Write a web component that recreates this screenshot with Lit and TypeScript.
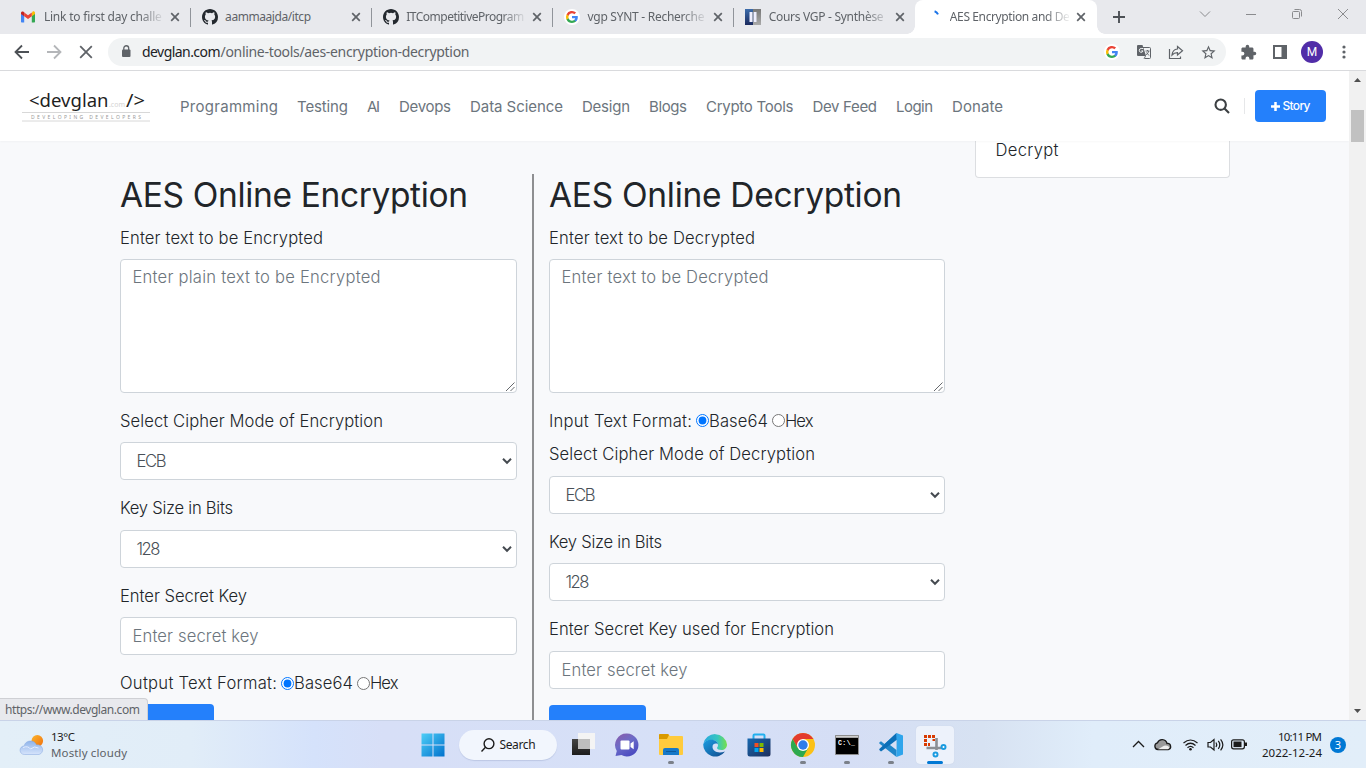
import { LitElement, html, css, svg } from "lit";
import { customElement, property, state } from "lit/decorators.js";
import { classMap } from "lit/directives/class-map.js";
import { styleMap } from "lit/directives/style-map.js";

/** A single line of text tracked out (or in) to fill a given width. */
@customElement("fit-text")
class FitText extends LitElement {
  static styles = css`
    :host { display: inline-block; white-space: pre; flex: none; }
    .box { display: block; }
    .run { display: inline-block; }
  `;
  @property() text = "";
  @property({ type: Number }) w = 0;
  @state() spacing = 0;

  firstUpdated() {
    const run = this.renderRoot.querySelector(".run") as HTMLElement;
    const natural = run.getBoundingClientRect().width;
    this.spacing = (this.w - natural) / Math.max(1, this.text.length - 1);
  }
  render() {
    return html`<span class="box" style=${styleMap({ width: `${this.w}px`, letterSpacing: `${this.spacing}px` })}><span class="run">${this.text}</span></span>`;
  }
}

const fit = (text: string, w: number) => html`<fit-text .text=${text} .w=${w}></fit-text>`;

const googleG = svg`
  <path fill="#4285F4" d="M22.56 12.25c0-.78-.07-1.53-.2-2.25H12v4.26h5.92a5.06 5.06 0 0 1-2.2 3.32v2.77h3.57c2.08-1.92 3.27-4.74 3.27-8.1z"/>
  <path fill="#34A853" d="M12 23c2.97 0 5.46-.98 7.28-2.66l-3.57-2.77c-.98.66-2.23 1.06-3.71 1.06-2.86 0-5.29-1.93-6.16-4.53H2.18v2.84A11 11 0 0 0 12 23z"/>
  <path fill="#FBBC05" d="M5.84 14.09a6.6 6.6 0 0 1 0-4.18V7.07H2.18a11 11 0 0 0 0 9.86l3.66-2.84z"/>
  <path fill="#EA4335" d="M12 5.38c1.62 0 3.06.56 4.21 1.64l3.15-3.15A11 11 0 0 0 2.18 7.07l3.66 2.84C6.71 7.31 9.14 5.38 12 5.38z"/>`;

const googleBadge = html`<svg width="16" height="16" viewBox="0 0 16 16"><circle cx="8" cy="8" r="8" fill="#fff"/><g transform="translate(1.4 1.4) scale(.55)">${googleG}</g></svg>`;

const icons = {
  gmail: html`<svg width="16" height="16" viewBox="0 0 16 16">
    <path fill="#4285f4" d="M1 4.2v8.2c0 .6.4 1 1 1h2.2V6.6z"/>
    <path fill="#34a853" d="M15 4.2v8.2c0 .6-.4 1-1 1h-2.2V6.6z"/>
    <path fill="#fbbc04" d="M11.8 3.9v3.4L15 5V3.9c0-1.300-1.500-2-2.500-1.200z"/>
    <path fill="#ea4335" d="M4.200 7.300V3.400L8 6.200l3.800-2.800v3.900L8 10.100z"/>
    <path fill="#c5221f" d="M1 3.900V5l3.200 2.300V3.400l-.7-.6C2.500 2 1 2.600 1 3.900z"/></svg>`,
  github: html`<svg width="16" height="16" viewBox="0 0 16 16"><path fill="#24292f" d="M8 0C3.580 0 0 3.580 0 8c0 3.540 2.290 6.530 5.470 7.590.4.070.550-.170.550-.380 0-.190-.010-.820-.010-1.490-2.010.370-2.530-.490-2.690-.940-.090-.230-.480-.940-.820-1.130-.280-.150-.680-.520-.010-.530.630-.010 1.080.580 1.230.820.720 1.210 1.870.870 2.330.660.070-.520.280-.870.510-1.070-1.780-.2-3.640-.890-3.640-3.950 0-.870.310-1.590.820-2.150-.080-.2-.360-1.020.080-2.120 0 0 .670-.210 2.200.820a7.600 7.600 0 0 1 4 0c1.530-1.040 2.200-.820 2.200-.820.440 1.100.160 1.920.080 2.120.510.560.820 1.270.820 2.150 0 3.070-1.870 3.750-3.650 3.950.290.250.540.730.540 1.480 0 1.070-.010 1.930-.010 2.200 0 .210.150.460.550.380A8.010 8.010 0 0 0 16 8c0-4.420-3.580-8-8-8z"/></svg>`,
  google: googleBadge,
  book: html`<svg width="16" height="16" viewBox="0 0 16 16"><defs><linearGradient id="b" x2="0" y2="1"><stop stop-color="#3c6cab"/><stop offset="1" stop-color="#1b2a5e"/></linearGradient><linearGradient id="c" x2="0" y2="1"><stop stop-color="#777"/><stop offset="1" stop-color="#aaa"/></linearGradient></defs><path fill="url(#b)" d="M0 0h8v3H5v10h3v3H0z"/><path fill="url(#c)" d="M8 0h8v16H8v-3h3V3H8z"/><path fill="#eef" d="M4.500 3h3v10h-3zM8.500 3h3v10h-3z"/><path fill="#53617f" d="M7.500 3h1v10h-1z"/></svg>`,
  spinner: html`<svg width="16" height="16" viewBox="0 0 16 16"><path d="M8.600 2.300q2.400.8 3.400 3.100" fill="none" stroke="#1a73e8" stroke-width="2"/></svg>`,
};

const tabs = [
  { icon: icons.gmail, text: "Link to first day challe", w: 118 },
  { icon: icons.github, text: "aammaajda/itcp", w: 86 },
  { icon: icons.github, text: "ITCompetitiveProgram", w: 118 },
  { icon: icons.google, text: "vgp SYNT - Recherche", w: 117 },
  { icon: icons.book, text: "Cours VGP - Synthèse", w: 115 },
  { icon: icons.spinner, text: "AES Encryption and De", w: 120 },
];

@customElement("browser-chrome")
class BrowserChrome extends LitElement {
  static styles = css`
    :host { display: block; font-family: "Noto Sans", "Open Sans", sans-serif; color: #5f6368; }
    svg { display: block; flex: none; }
    .strip { display: flex; height: 34px; background: #e8e9ed; padding-left: 9.4px; box-sizing: border-box; }
    .tab { display: flex; align-items: center; box-sizing: border-box; width: 181.200px; padding: 0 10px 0 11px; position: relative; font-size: 12px; }
    .label { display: flex; margin-left: 7.500px; width: 119px; overflow: hidden; line-height: 18px; }
    .fade { mask-image: linear-gradient(90deg, #000 80%, transparent 102%); }
    .close { margin-left: 7px; }
    .sep::after { content: ""; position: absolute; right: 0; top: 8px; width: 1px; height: 19px; background: #90949a; }
    .active { background: #fff; border-radius: 8px 8px 0 0; }
    .active::before, .active::after { content: ""; position: absolute; bottom: 0; width: 8px; height: 8px; }
    .active::before { left: -8px; background: radial-gradient(circle at 0 0, transparent 7.500px, #fff 8px); }
    .active::after { right: -8px; background: radial-gradient(circle at 100% 0, transparent 7.500px, #fff 8px); }
    .plus { align-self: center; margin-left: 15px; }
    .win { display: flex; margin-left: auto; height: 28px; }
    .win svg { width: 46px; height: 28px; }
    .bar { display: flex; align-items: center; height: 36px; background: #fff; padding: 0 6px; border-bottom: 1px solid #d9dadd; }
    .btn { width: 32px; height: 32px; display: grid; place-items: center; }
    .omni { display: flex; align-items: center; flex: 1; height: 28px; border-radius: 14px; background: #f1f3f4; margin: 0 6px; padding: 0 2px; font-size: 14px; line-height: 20px; }
    .lock { margin: 0 8px 0 8px; }
    .host { color: #202124; }
    .acts { display: flex; margin-left: auto; }
    .avatar { width: 22px; height: 22px; border-radius: 50%; background: #512da8; color: #fff; display: grid; place-items: center; font: 12px/22px Roboto, sans-serif; }
  `;
  render() {
    const x = html`<svg class="close" width="10" height="10" viewBox="0 0 10 10"><path d="M1.200 1.200l7.600 7.600M8.800 1.200L1.200 8.800" stroke="#5f6368" stroke-width="1.700"/></svg>`;
    return html`
      <div class="strip">
        ${tabs.map((t, i) => html`<div class=${classMap({ tab: true, sep: i < 4, active: i === 5 })}>
          ${t.icon}<span class=${classMap({ label: true, fade: i !== 1 })}>${fit(t.text, t.w)}</span>${x}</div>`)}
        <svg class="plus" width="14" height="14" viewBox="0 0 14 14"><path d="M7 1v12M1 7h12" stroke="#4d5156" stroke-width="1.900"/></svg>
        <div class="win">
          <svg viewBox="0 0 46 28" fill="none" stroke="#8a8b8e"><path d="M18 11.500l5 5 5-5"/></svg>
          <svg viewBox="0 0 46 28" stroke="#8a8b8e"><path d="M18 14.500h10"/></svg>
          <svg viewBox="0 0 46 28" fill="none" stroke="#8a8b8e"><rect x="18.500" y="11.500" width="7" height="7" rx="1"/><path d="M20.500 9.500h5q2 0 2 2v5"/></svg>
          <svg viewBox="0 0 46 28" stroke="#8a8b8e"><path d="M18 9l10 10M28 9L18 19"/></svg>
        </div>
      </div>
      <div class="bar">
        <span class="btn"><svg width="16" height="16" viewBox="0 0 16 16" fill="none" stroke="#4d5156" stroke-width="1.800"><path d="M15 8H2M8 1.500L1.500 8 8 14.500"/></svg></span>
        <span class="btn"><svg width="16" height="16" viewBox="0 0 16 16" fill="none" stroke="#b4b6b9" stroke-width="1.800"><path d="M1 8h13M8 1.500L14.500 8 8 14.500"/></svg></span>
        <span class="btn"><svg width="16" height="16" viewBox="0 0 16 16" stroke="#5f6368" stroke-width="1.800"><path d="M2.200 2.200l11.600 11.600M13.800 2.200L2.200 13.800"/></svg></span>
        <div class="omni">
          <svg class="lock" width="16" height="16" viewBox="0 0 16 16"><rect x="4" y="5.500" width="8.500" height="7.500" rx="1" fill="#5f6368"/><path d="M5.800 6V4.200a2.450 2.450 0 0 1 4.900 0V6" fill="none" stroke="#5f6368" stroke-width="1.300"/></svg>
          <span class="host">${fit("devglan.com", 78.5)}</span>${fit("/online-tools/aes-encryption-decryption", 249)}
          <div class="acts">
            <span class="btn">${googleBadge}</span>
            <span class="btn"><svg width="16" height="16" viewBox="0 0 16 16"><path d="M6 3.500h7.500q1 0 1 1v9q0 1-1 1H9" fill="none" stroke="#5f6368"/><path fill="#5f6368" d="M2 1h4.500l3.500 11H2q-1 0-1-1V2q0-1 1-1z"/><path d="M7 4.500H5.200a1.900 1.900 0 1 0 1.800 2.400H5.300" fill="none" stroke="#f1f3f4"/><path d="M9.500 7h4M11.500 6v1M12.800 7q-.5 2.500-3 4M10.500 8.500l2.500 3M8 15l1.500-3" fill="none" stroke="#5f6368" stroke-width=".9"/></svg></span>
            <span class="btn"><svg width="16" height="16" viewBox="0 0 16 16" fill="none" stroke="#5f6368" stroke-width="1.200"><path d="M1.500 5v9.500h11v-2M9.500 2.500l5 4.200-5 4.200V8.600Q6 8.600 4 11q.5-5.500 5.500-6z"/></svg></span>
            <span class="btn"><svg width="17" height="17" viewBox="0 0 24 24" fill="#5f6368"><path d="M22 9.240l-7.190-.62L12 2 9.190 8.630 2 9.240l5.460 4.730L5.820 21 12 17.270 18.180 21l-1.630-7.030L22 9.240zM12 15.400l-3.760 2.270 1-4.280-3.320-2.880 4.380-.38L12 6.100l1.710 4.040 4.380.38-3.320 2.880 1 4.280L12 15.400z"/></svg></span>
          </div>
        </div>
        <span class="btn"><svg width="17" height="17" viewBox="0 0 24 24" fill="#5f6368"><path d="M20.500 11H19V7c0-1.100-.9-2-2-2h-4V3.500a2.500 2.500 0 0 0-5 0V5H4c-1.100 0-1.990.9-1.990 2v3.800H3.500a2.700 2.700 0 0 1 0 5.400H2V20c0 1.100.9 2 2 2h3.800v-1.500a2.700 2.700 0 0 1 5.400 0V22H17c1.100 0 2-.9 2-2v-4h1.500a2.500 2.500 0 0 0 0-5z"/></svg></span>
        <span class="btn"><svg width="14" height="14" viewBox="0 0 14 14"><path fill="#5f6368" d="M0 0h14v14H0zM2 2v10h6.500V2z" fill-rule="evenodd"/></svg></span>
        <span class="btn"><span class="avatar">M</span></span>
        <span class="btn"><svg width="4" height="14" viewBox="0 0 4 14" fill="#5f6368"><circle cx="2" cy="2" r="1.600"/><circle cx="2" cy="7" r="1.600"/><circle cx="2" cy="12" r="1.600"/></svg></span>
      </div>`;
  }
}

const nav: [string, number][] = [["Programming", 98], ["Testing", 51], ["AI", 13], ["Devops", 52], ["Data Science", 93], ["Design", 48], ["Blogs", 38], ["Crypto Tools", 87.5], ["Dev Feed", 64.5], ["Login", 37], ["Donate", 51]];

@customElement("site-page")
class SitePage extends LitElement {
  static styles = css`
    :host { display: flex; height: 649px; background: #f8f9fb; overflow: hidden; position: relative; font-family: Inter, "Open Sans", sans-serif; font-weight: 300; font-size: 16.600px; line-height: 24px; color: #212529; }
    svg { display: block; flex: none; }
    .page { flex: 1; display: flex; flex-direction: column; min-width: 0; overflow: hidden; }
    .head { display: flex; align-items: center; height: 70px; flex: none; background: #fff; padding: 0 23px 0 20px; box-shadow: 0 1px 2px rgba(0,0,0,.03); position: relative; z-index: 1; box-sizing: border-box; }
    .nav { display: flex; gap: 19px; margin: 2px 0 0 28px; font-size: 15px; font-weight: 400; color: #6c757d; }
    .tools { display: flex; align-items: center; margin-left: auto; }
    .rule { width: 1px; height: 16px; background: #e6e7e9; margin: 0 10px 0 14px; }
    .story { display: flex; align-items: center; justify-content: center; gap: 3px; width: 71px; height: 32px; border-radius: 4px; background: #2480fb; color: #fff; font-size: 12px; font-weight: 500; }
    .body { display: flex; align-items: flex-start; padding-left: 120px; }
    .col { width: 396px; padding-top: 33px; }
    .first { width: 397px; padding-right: 15px; border-right: 2px solid #8e8f91; margin-right: 15px; margin-top: 33px; padding-top: 0; height: 560px; }
    .title { font-size: 33.500px; font-weight: 430; line-height: 42px; height: 52px; }
    .lead, .lab, .fmt { display: flex; align-items: center; height: 24px; }
    .lead { height: 23px; padding-bottom: 1px; }
    .box { box-sizing: border-box; border: 1px solid #ced4da; border-radius: 4px; background: #fff; display: flex; color: #6c757d; }
    .area { height: 133.700px; margin-top: 9px; padding: 5px 0 0 11.500px; justify-content: space-between; }
    .grip { align-self: flex-end; }
    .lab { margin: 16.300px 0 9.200px; }
    .tight { margin-top: 9.500px; }
    .ctl { height: 38px; align-items: center; padding: 0 4px 0 11.500px; justify-content: space-between; }
    .sel { color: #495057; padding-left: 15.500px; }
    .fmt { margin-top: 16.300px; }
    .radio { width: 13px; height: 13px; margin: 0; flex: none; accent-color: #0075ff; }
    .gap { width: 4px; }
    .go { width: 94px; height: 38px; border-radius: 4px; background: #2480fb; margin-top: 9px; }
    .go2 { width: 97px; margin-top: 16px; }
    .card { width: 255px; height: 37px; margin-left: 30px; border: 1px solid #dcdee1; border-top: 0; border-radius: 0 0 4px 4px; background: #fff; box-sizing: border-box; padding-left: 19.500px; line-height: 18px; }
    .scroll { width: 17px; background: #f1f1f1; display: flex; flex-direction: column; align-items: center; }
    .up { margin-top: 7px; }
    .thumb { width: 13px; height: 32px; background: #c1c1c1; margin-top: 28px; }
    .down { margin-top: auto; margin-bottom: 7px; }
    .status { position: absolute; left: 0; bottom: 0; width: 148px; height: 22px; box-sizing: border-box; border: 1px solid #cfd0d4; border-left: 0; border-bottom: 0; border-radius: 0 4px 0 0; background: #e8e9ed; color: #5f6368; padding-left: 5px; font: 12px/22px "Noto Sans", sans-serif; z-index: 2; }
  `;
  area(text: string, w: number) {
    return html`<div class="box area">${fit(text, w)}<svg class="grip" width="11" height="11" viewBox="0 0 11 11" stroke="#55585c" stroke-width=".9"><path d="M1 10L9.500 1.500M5.500 10l4-4"/></svg></div>`;
  }
  select(text: string, w: number) {
    return html`<div class="box ctl sel">${fit(text, w)}<svg width="10" height="8" viewBox="0 0 10 8" fill="none" stroke="#454a50" stroke-width="2"><path d="M1 1.800l4 4 4-4"/></svg></div>`;
  }
  format(text: string, w: number, name: string) {
    return html`<div class="fmt">${fit(text, w)}<span class="gap"></span><input class="radio" type="radio" name=${name} checked>${fit("Base64", 59)}<span class="gap"></span><input class="radio" type="radio" name=${name}>${fit("Hex", 28.5)}</div>`;
  }
  render() {
    return html`
      <div class="page">
        <div class="head">
          <svg width="132" height="36" viewBox="0 0 132 36" font-family="Noto Sans, sans-serif" font-weight="400">
            <g fill="#1f1f1f" font-size="17.500"><text x="9" y="18.500" textLength="79.500" lengthAdjust="spacingAndGlyphs">&lt;devglan</text><text x="106" y="18.500" textLength="19" lengthAdjust="spacingAndGlyphs">/&gt;</text></g>
            <text x="89" y="18.500" font-size="7" fill="#d4d4d4" textLength="16">.com</text>
            <path d="M2 24.500h128M2 33h128" stroke="#d8d8d8"/>
            <text x="11" y="31" font-size="5" fill="#999" textLength="110">DEVELOPING DEVELOPERS</text>
          </svg>
          <div class="nav">${nav.map(([t, w]) => fit(t, w))}</div>
          <div class="tools">
            <svg width="16" height="16" viewBox="0 0 16 16" fill="none" stroke="#3c4043" stroke-width="2.100"><circle cx="6.700" cy="6.700" r="5.200"/><path d="M10.500 10.500l4.500 4.500"/></svg>
            <span class="rule"></span>
            <div class="story"><svg width="9" height="9" viewBox="0 0 9 9"><path d="M4.500 0v9M0 4.500h9" stroke="#fff" stroke-width="2.500"/></svg>${fit("Story", 28)}</div>
          </div>
        </div>
        <div class="body">
          <div class="col first">
            <div class="title">${fit("AES Online Encryption", 348)}</div>
            <div class="lead">${fit("Enter text to be Encrypted", 203)}</div>
            ${this.area("Enter plain text to be Encrypted", 248)}
            <div class="lab">${fit("Select Cipher Mode of Encryption", 263)}</div>
            ${this.select("ECB", 30)}
            <div class="lab">${fit("Key Size in Bits", 113)}</div>
            ${this.select("128", 24)}
            <div class="lab">${fit("Enter Secret Key", 127)}</div>
            <div class="box ctl">${fit("Enter secret key", 126)}</div>
            ${this.format("Output Text Format:", 157, "out")}
            <div class="go"></div>
          </div>
          <div class="col">
            <div class="title">${fit("AES Online Decryption", 353)}</div>
            <div class="lead">${fit("Enter text to be Decrypted", 206)}</div>
            ${this.area("Enter text to be Decrypted", 207)}
            ${this.format("Input Text Format:", 143, "in")}
            <div class="lab tight">${fit("Select Cipher Mode of Decryption", 266)}</div>
            ${this.select("ECB", 30)}
            <div class="lab">${fit("Key Size in Bits", 113)}</div>
            ${this.select("128", 24)}
            <div class="lab">${fit("Enter Secret Key used for Encryption", 285)}</div>
            <div class="box ctl">${fit("Enter secret key", 126)}</div>
            <div class="go go2"></div>
          </div>
          <div class="card">${fit("Decrypt", 63)}</div>
        </div>
      </div>
      <div class="scroll">
        <svg class="up" width="7" height="4" viewBox="0 0 7 4"><path d="M0 4L3.500 0 7 4z" fill="#505050"/></svg>
        <div class="thumb"></div>
        <svg class="down" width="7" height="4" viewBox="0 0 7 4"><path d="M0 0l3.500 4L7 0z" fill="#505050"/></svg>
      </div>
      <div class="status">${fit("https://www.devglan.com", 135)}</div>`;
  }
}

const apps = [
  { run: "", art: svg`<defs><linearGradient id="tv" x2="0" y2="1"><stop stop-color="#444"/><stop offset="1" stop-color="#1c1c1c"/></linearGradient></defs><path d="M7 0h17v16H7z" fill="#f4f4f4"/><path d="M1 6h18v16H1z" fill="url(#tv)"/><path d="M7 6h12v10H7z" fill="#bdbdbd"/>` },
  { run: "", art: svg`<defs><linearGradient id="ch" x2=".6" y2="1"><stop stop-color="#8c5aa8"/><stop offset=".5" stop-color="#6c6cc8"/><stop offset="1" stop-color="#4b4bc0"/></linearGradient></defs><path d="M12 .5a11.500 11.500 0 1 1-5.500 21.600L.5 23l1.300-5A11.500 11.500 0 0 1 12 .5z" fill="url(#ch)"/><rect x="5.500" y="7.500" width="9" height="9" rx="1" fill="#fff"/><path d="M15.500 10.500l3.200-2.300v8l-3.200-2.300z" fill="#fff"/>` },
  { run: "on", art: svg`<path d="M0 2q0-1 1-1h8l2 2h12q1 0 1 1v17q0 1-1 1H1q-1 0-1-1z" fill="#ffcb3d"/><path d="M0 2q0-1 1-1h8l1 1-2 4H0z" fill="#d99a00"/><path d="M4 22v-5q0-2 2-2h12q2 0 2 2v5z" fill="#1678c8"/><path d="M7 18.500h10" stroke="#0c5a9c"/>` },
  { run: "", art: svg`<defs><linearGradient id="e1" x2="1"><stop stop-color="#2aa7e0"/><stop offset=".6" stop-color="#36c6c0"/><stop offset="1" stop-color="#75e04a"/></linearGradient><linearGradient id="e2" x2="1" y2="1"><stop stop-color="#1b9de2"/><stop offset="1" stop-color="#114a8b"/></linearGradient></defs><path d="M.3 11A12 12 0 0 1 24 11.500c0 3.500-2.500 5.500-5.500 5.500-2.500 0-4.500-.8-4.500-2 0-.8 1-1 1-3 0-2.800-2.500-5-6-5C4.500 7 1 9 .3 11z" fill="url(#e1)"/><path d="M.2 11.500C1 8.500 4.500 6.800 8.500 6.800c3.500 0 6.500 2.200 6.500 5 0-1.500-5.500-2.500-5.500 2.200 0 4 5 7 12.500 4.500A12 12 0 0 1 .2 11.500z" fill="url(#e2)"/>` },
  { run: "", art: svg`<defs><linearGradient id="st" x2="1" y2="1"><stop stop-color="#1668b0"/><stop offset="1" stop-color="#1f2f5c"/></linearGradient></defs><path d="M6.500 6V2.500q0-1 1-1h9q1 0 1 1V6" fill="none" stroke="#22b0ee" stroke-width="2"/><path d="M.5 5.500h23V21q0 2.500-2.500 2.500H3Q.5 23.500.5 21z" fill="url(#st)"/><path d="M7.500 10h4v4h-4z" fill="#f25022"/><path d="M12.500 10h4v4h-4z" fill="#7fba00"/><path d="M7.500 15h4v4h-4z" fill="#00a4ef"/><path d="M12.500 15h4v4h-4z" fill="#ffb900"/>` },
  { run: "on", art: svg`<circle cx="12" cy="12" r="12" fill="#fbc116"/><path d="M1.600 6A12 12 0 0 1 22.400 6H12l-5.200 9z" fill="#e33b2e"/><path d="M1.600 6A12 12 0 0 0 12 24l5.200-9H6.800z" fill="#2da94f"/><circle cx="12" cy="12" r="6" fill="#fff"/><circle cx="12" cy="12" r="4.700" fill="#2f7de9"/>` },
  { run: "on", art: svg`<path d="M.5 2.500h23v19H.5z" fill="#000" stroke="#8d8d8d"/><path d="M1 3h22v1.800H1z" fill="#d0d0d0"/><text x="3" y="11.500" font-size="6.500" font-weight="700" font-family="Liberation Mono, monospace" fill="#fff" textLength="17">C:\\_</text>` },
  { run: "on", art: svg`<path d="M17.500 0L5.500 11 2 8.300.3 9.500v1L17.500 24z" fill="#1f86c9"/><path d="M17.500 0L18 6.800 2 18.500.3 17v-1z" fill="#0b6fb8"/><path d="M17.500 0L24 2.500v19L17.500 24z" fill="#2fa5ec"/><path d="M17.500 7v10l-6.500-5z" fill="#d6dff4"/>` },
  { run: "active", art: svg`<g fill="#d83b01"><path d="M1 2h3v3H1zM5 2h3v3H5zM9 2h3v3H9zM1 6h3v3H1zM1 10h3v3H1zM5 10h2v3H5zM9.500 6H12v2H9.500z"/></g><path d="M13.500 5v12M3.500 15H18" stroke="#8b8f94" stroke-width="2.600"/><g fill="#fff" stroke="#1a9be0" stroke-width="2"><circle cx="20.500" cy="14" r="2"/><circle cx="12.500" cy="21.500" r="2"/></g>` },
];

@customElement("task-bar")
class TaskBar extends LitElement {
  static styles = css`
    :host { display: flex; align-items: center; box-sizing: border-box; height: 48px; border-top: 1px solid #c9d3e8; font-family: "Noto Sans", "Open Sans", sans-serif; color: #1b1b1b; font-size: 11.500px; line-height: 16px; background: linear-gradient(90deg, #e3eff8 0, #e1edf8 14%, #d5e2fb 23%, #d7dff7 28%, #d6e0f7 50%, #d5def5 62%, #d7e2f2 72%, #e0edfa 80%, #e2eef9 100%); }
    svg { display: block; flex: none; overflow: visible; }
    .weather { display: flex; align-items: center; width: 410.500px; box-sizing: border-box; padding-left: 20px; gap: 7px; }
    .info { display: flex; flex-direction: column; }
    .sub { color: #5c6167; }
    .cell { width: 44.050px; height: 48px; display: grid; place-items: center; position: relative; }
    .search { display: flex; align-items: center; justify-content: center; gap: 5px; width: 98px; height: 30px; border-radius: 15px; background: #f2f6fd; margin: 0 3.500px 0 4.500px; box-shadow: 0 1px 1px rgba(90,110,160,.2); font-size: 12px; }
    .tile { width: 38px; height: 38px; border-radius: 4px; display: grid; place-items: center; }
    .active .tile { background: #edf2fb; box-shadow: 0 0 1px #bcc8de; }
    .on::after, .active::after { content: ""; position: absolute; bottom: 4.500px; left: calc(50% - 3px); width: 6px; height: 3px; border-radius: 2px; background: #7b8089; }
    .active::after { left: calc(50% - 8px); width: 16px; background: #0078d4; }
    .tray { display: flex; align-items: center; margin-left: auto; padding-right: 20px; }
    .clock { display: flex; flex-direction: column; align-items: flex-end; margin: 0 8px 0 4px; }
    .count { width: 16px; height: 16px; border-radius: 50%; background: #0078d4; color: #fff; font-size: 11px; text-align: center; }
  `;
  render() {
    return html`
      <div class="weather">
        <svg width="24" height="20" viewBox="0 0 24 20"><defs><linearGradient id="s" x2="1" y2="1"><stop stop-color="#fbb52c"/><stop offset="1" stop-color="#f0700e"/></linearGradient><linearGradient id="cl" x2="0" y2="1"><stop stop-color="#8fb4ea"/><stop offset="1" stop-color="#d6e4fb"/></linearGradient></defs><circle cx="17.300" cy="5.800" r="5.800" fill="url(#s)"/><path d="M4.500 19.500a4.300 4.300 0 0 1-.3-8.600A6.500 6.500 0 0 1 16.500 10a4.900 4.900 0 0 1 2.500 9.500z" fill="url(#cl)" stroke="#83a4de" stroke-width=".5"/><path d="M3 12.500q5-2 7.500 1.500 4-3.500 8-1" fill="none" stroke="#e3edff"/></svg>
        <div class="info">${fit("13°C", 24)}<span class="sub">${fit("Mostly cloudy", 76)}</span></div>
      </div>
      <div class="cell"><svg width="24" height="24" viewBox="0 0 24 24"><defs><linearGradient id="w" gradientUnits="userSpaceOnUse" x2="24" y2="24"><stop stop-color="#4fd0f8"/><stop offset="1" stop-color="#0070cc"/></linearGradient></defs><path fill="url(#w)" d="M.5.500h11v11H.5zM12.500.500h11v11h-11zM.5 12.500h11v11H.5zM12.500 12.500h11v11h-11z"/></svg></div>
      <div class="search"><svg width="14" height="14" viewBox="0 0 14 14" fill="none" stroke="#1b1b1b" stroke-width="1.400"><circle cx="8" cy="5.700" r="4.900"/><path d="M4.500 9.300L.5 13.500"/></svg>${fit("Search", 36)}</div>
      ${apps.map(a => html`<div class="cell ${a.run}"><div class="tile"><svg width="24" height="24" viewBox="0 0 24 24">${a.art}</svg></div></div>`)}
      <div class="tray">
        <svg width="64" height="16" viewBox="0 0 64 16" fill="none" stroke="#1b1b1b" stroke-width="1.300"><path d="M1 10l5.500-5.500L12 10"/><path d="M26 12.500a3.400 3.400 0 0 1-.5-6.700A5 5 0 0 1 35 6.500a3.100 3.100 0 0 1 1.500 6z" fill="#999"/><path d="M26 12.300l6-3.500q4-1 5.500 2l-1.500 1.500z" fill="#eee" stroke="none"/><path d="M51.500 6q7-6 14 0M53.500 8.500q5-4.500 10 0M55.500 10.700q3-2.800 6 0" stroke-width="1.200"/><circle cx="58.500" cy="12.300" r="1.300" fill="#1b1b1b" stroke="none"/></svg>
        <svg width="62" height="16" viewBox="0 0 62 16" fill="none" stroke="#1b1b1b" stroke-width="1.200"><path d="M12 5.500h2.500L18 2.500v10.500l-3.500-3H12zM20 5.500q1.500 2.200 0 4.500M22.300 3.800q3 4 0 8M24.600 2.300q4.500 5.500 0 11"/><rect x="35.600" y="2.800" width="12.800" height="9" rx="2"/><path d="M37.500 4.500h8v5.600h-8z" fill="#1b1b1b" stroke="none"/><path d="M50 5.500v3.500" stroke-width="2"/></svg>
        <div class="clock">${fit("10:11 PM", 44)}${fit("2022-12-24", 60)}</div>
        <div class="count">3</div>
      </div>`;
  }
}

@customElement("app-root")
class AppRoot extends LitElement {
  static styles = css`
    :host { display: block; width: 1366px; height: 768px; overflow: hidden; }
  `;
  render() {
    return html`<browser-chrome></browser-chrome><site-page></site-page><task-bar></task-bar>`;
  }
}
